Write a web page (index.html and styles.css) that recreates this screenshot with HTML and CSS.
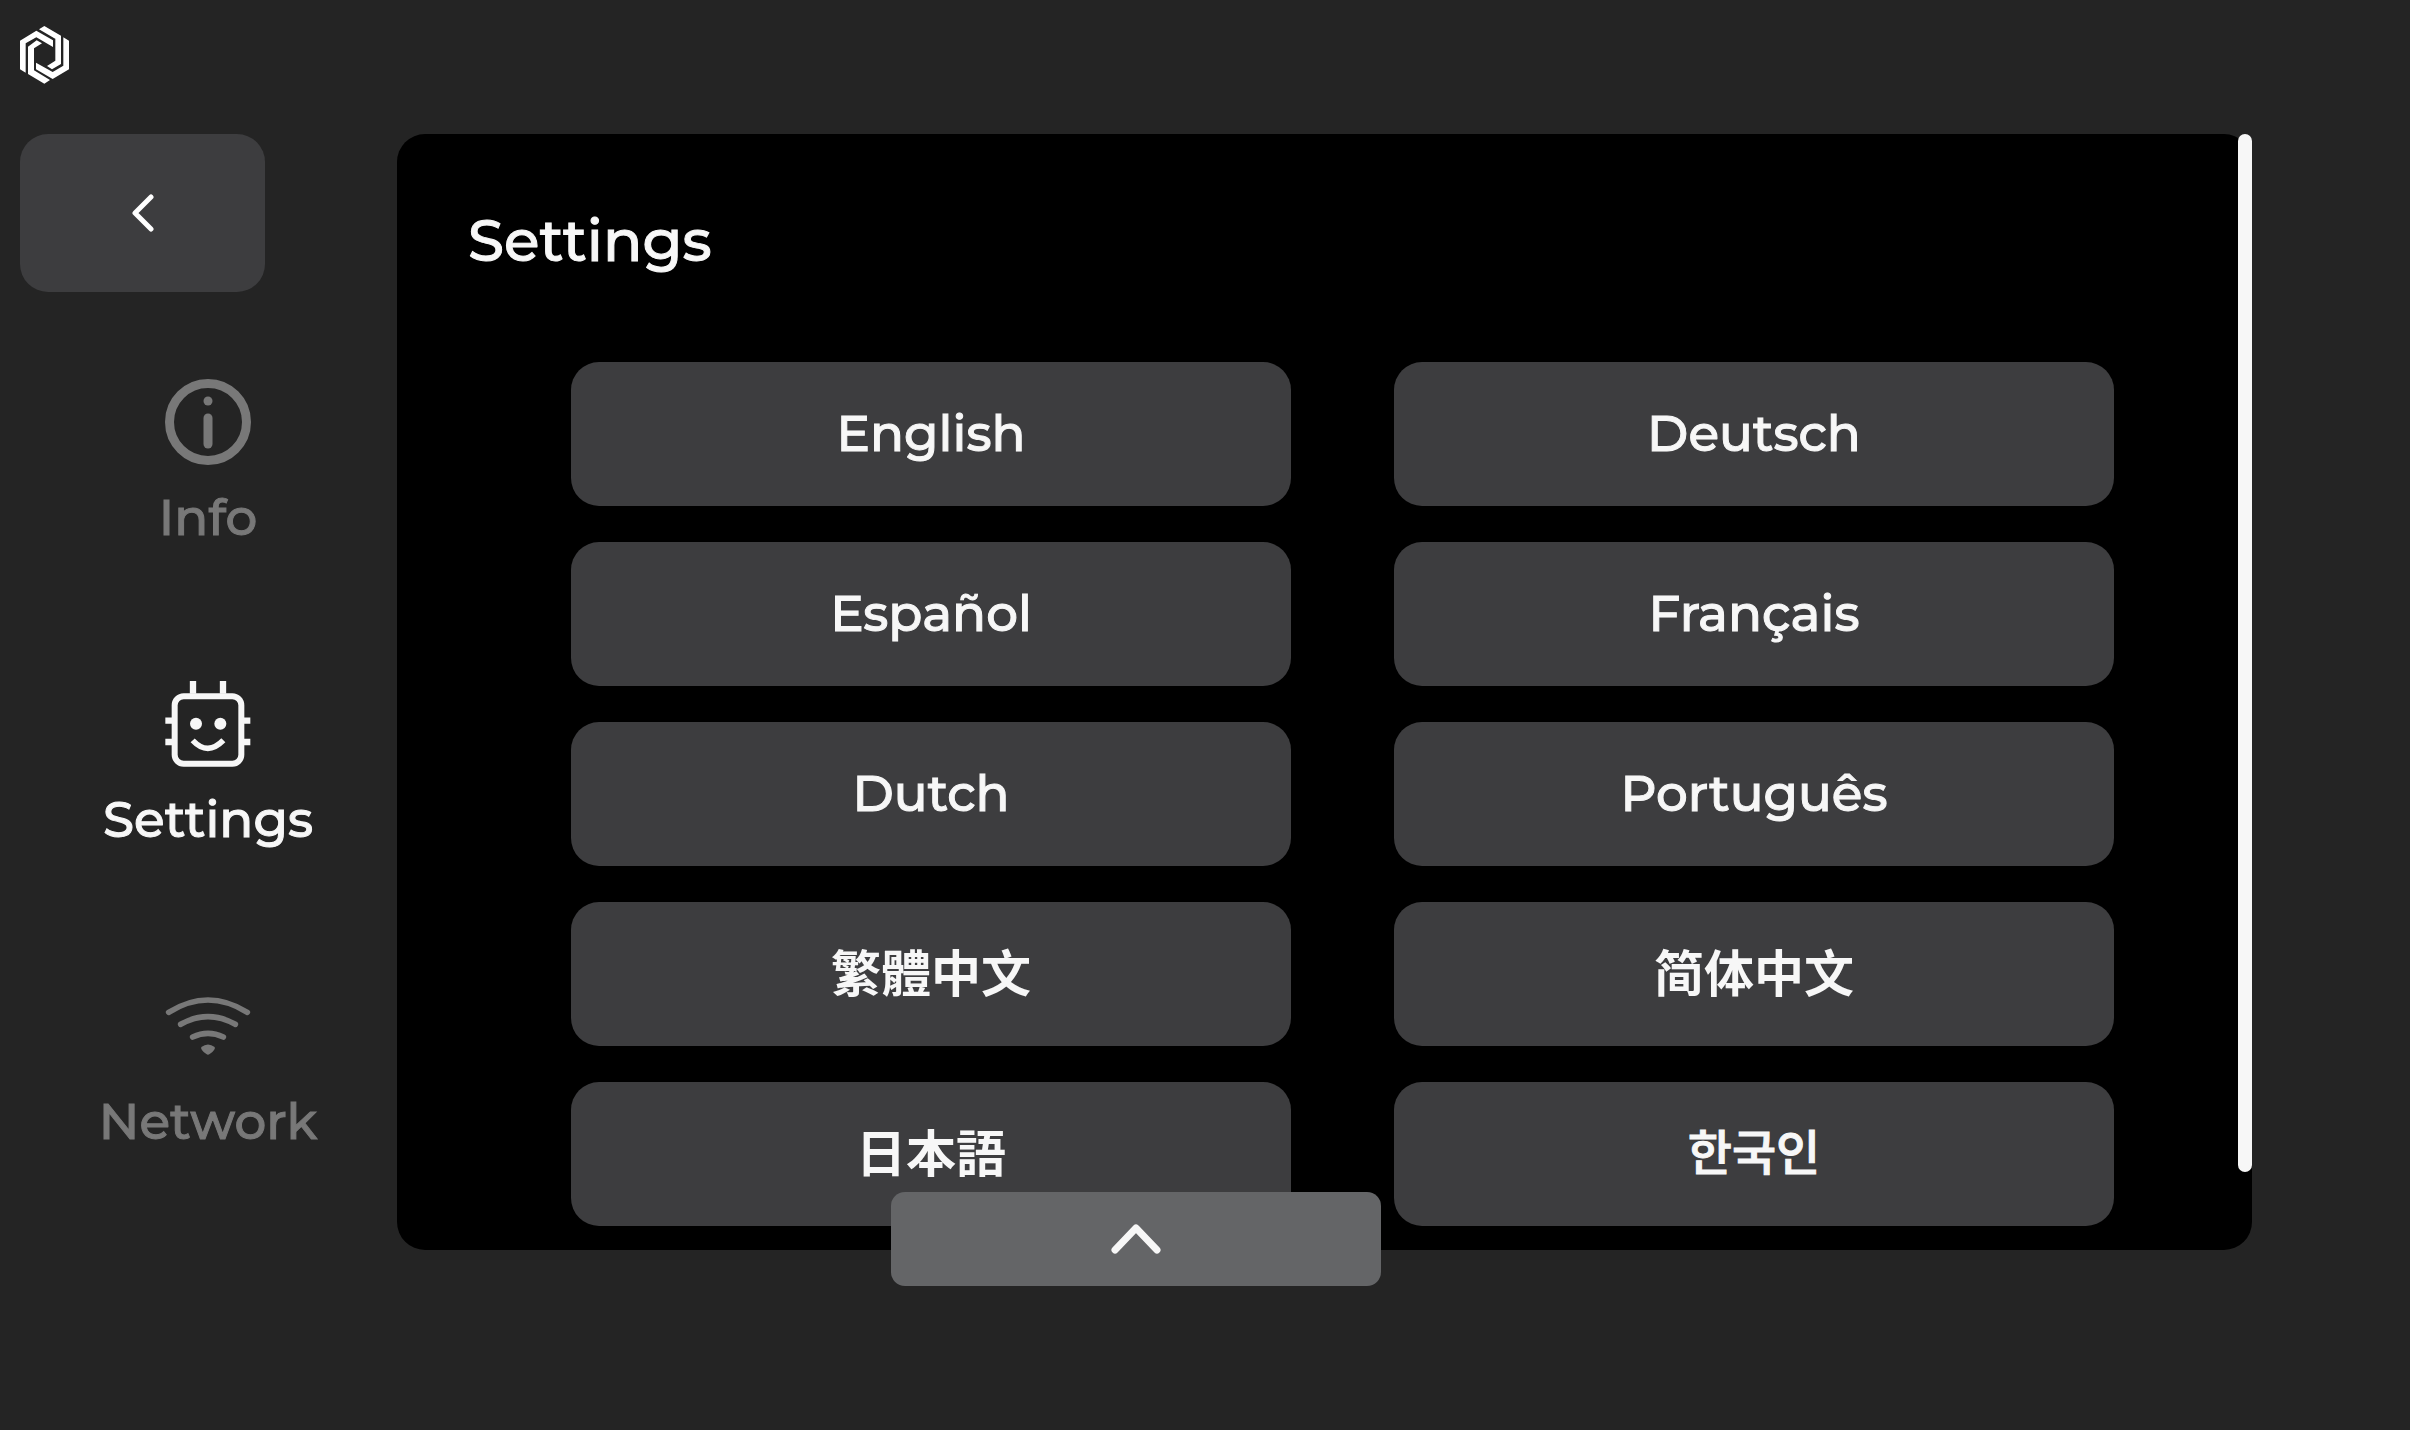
FILE: index.html
```html
<!DOCTYPE html>
<html lang="en">
<head>
  <meta charset="utf-8">
  <meta name="viewport" content="width=device-width, initial-scale=1">
  <title>Settings</title>
  <link rel="stylesheet" href="styles.css">
</head>
<body>
  <header class="topbar">
    <svg class="logo" viewBox="60 78 147 174" role="img" aria-label="Home">
      <path d="M117 88 133 78 183 107V192L156 208 141 198 166 182V116L163 115Z"/>
      <path d="M60 122 109 92 159 121V141L109 112 77 130V218L60 208Z"/>
      <path d="M84 140 110 121 126 130 102 145V211L150 240 133 251 84 222Z"/>
      <path d="M190 112 207 122V208L158 237 108 208V188L158 216 190 197Z"/>
    </svg>
  </header>

  <div class="layout">
    <aside class="sidebar">
      <button class="back" type="button" aria-label="Back">
        <svg class="back-icon" viewBox="0 0 22 38"><path d="M19 3 3 19 19 35"/></svg>
      </button>
      <nav class="nav">
        <a class="nav-item" href="#info">
          <svg class="nav-icon" viewBox="0 0 86 86">
            <circle class="line" cx="43" cy="43" r="38.5" stroke-width="9"/>
            <circle class="solid" cx="43" cy="22" r="4.5"/>
            <path class="line round" d="M43 39V65" stroke-width="9"/>
          </svg>
          <span>Info</span>
        </a>
        <a class="nav-item active" href="#settings" aria-current="page">
          <svg class="nav-icon" viewBox="254 63 258 258">
            <rect class="line" x="283" y="109" width="200" height="202" rx="27" stroke-width="18"/>
            <path class="line" d="M338 63V101M428 63V101M255 182H275M255 246H275M491 182H510M491 246H510" stroke-width="19"/>
            <circle class="solid" cx="347" cy="191" r="18"/>
            <circle class="solid" cx="420" cy="191" r="18"/>
            <path class="line" d="M337 241Q382 289 429 241" stroke-width="17"/>
          </svg>
          <span>Settings</span>
        </a>
        <a class="nav-item" href="#network">
          <svg class="nav-icon" viewBox="255 42 258 258">
            <path class="line round" d="M266 130Q384 56 502 130M302 166Q384 120 466 166M338 204Q384 182 430 204" stroke-width="17"/>
            <path class="solid" d="M364 234Q384 219 404 234Q408 242 389 255Q384 259 379 255Q360 242 364 234Z"/>
          </svg>
          <span>Network</span>
        </a>
      </nav>
    </aside>

    <main class="panel">
      <h1 class="title">Settings</h1>
      <div class="languages">
        <button class="language" type="button" lang="en">English</button>
        <button class="language" type="button" lang="de">Deutsch</button>
        <button class="language" type="button" lang="es">Español</button>
        <button class="language" type="button" lang="fr">Français</button>
        <button class="language" type="button" lang="nl">Dutch</button>
        <button class="language" type="button" lang="pt">Português</button>
        <button class="language cjk" type="button" lang="zh-Hant">繁體中文</button>
        <button class="language cjk" type="button" lang="zh-Hans">简体中文</button>
        <button class="language cjk" type="button" lang="ja">日本語</button>
        <button class="language cjk" type="button" lang="ko">한국인</button>
      </div>
      <div class="scroll-thumb"></div>
    </main>

    <button class="drawer" type="button" aria-label="Open drawer">
      <svg class="drawer-icon" viewBox="0 0 50 30"><path d="M4 26 25 4 46 26"/></svg>
    </button>
  </div>
</body>
</html>
```
FILE: styles.css
```css
* {
  box-sizing: border-box;
}

body {
  min-height: 100vh;
  margin: 0;
  background: #242424;
  color: #f7f7f7;
  font-family: "Montserrat Medium", Montserrat, Inter, "Noto Sans CJK SC", sans-serif;
  font-size: 50px;
  font-weight: 500;
  line-height: 60px;
  -webkit-text-stroke: 1px currentColor;
}

svg {
  display: block;
}

button {
  margin: 0;
  padding: 0;
  border: 0;
  color: inherit;
  font: inherit;
  cursor: pointer;
}

.topbar {
  padding: 26px 20px 50px;
}

.logo {
  width: 49px;
  height: 58px;
  fill: #fff;
}

.layout {
  position: relative;
  display: flex;
  margin: 0 158px 0 20px;
}

.sidebar {
  flex: none;
  width: 377px;
}

.back {
  display: flex;
  align-items: center;
  justify-content: center;
  width: 245px;
  height: 158px;
  border-radius: 28px;
  background: #3d3d3f;
}

.back-icon {
  width: 22px;
  height: 38px;
  fill: none;
  stroke: #fff;
  stroke-width: 5;
  stroke-linecap: round;
  stroke-linejoin: round;
}

.nav {
  display: flex;
  flex-direction: column;
  gap: 133px;
  width: 376px;
  padding-top: 87px;
}

.nav-item {
  display: flex;
  flex-direction: column;
  align-items: center;
  gap: 23px;
  color: #787878;
  text-decoration: none;
}

.nav-item.active {
  color: #f7f7f7;
}

.nav-icon {
  width: 86px;
  height: 86px;
}

.line {
  fill: none;
  stroke: currentColor;
}

.round {
  stroke-linecap: round;
}

.solid {
  fill: currentColor;
}

.panel {
  position: relative;
  flex: 1;
  padding: 71px 138px 24px 174px;
  border-radius: 28px;
  background: #000;
}

.title {
  margin: 0 0 85px -103px;
  font-size: 58px;
  font-weight: 500;
  line-height: 72px;
}

.languages {
  display: grid;
  grid-template-columns: 1fr 1fr;
  gap: 36px 103px;
}

.language {
  height: 144px;
  border-radius: 28px;
  background: #3d3d3f;
}

.cjk {
  padding-bottom: 8px;
  font-weight: 700;
  -webkit-text-stroke: 0;
}

.language:lang(zh-Hant) {
  font-family: "Noto Sans CJK TC", sans-serif;
}

.language:lang(zh-Hans) {
  font-family: "Noto Sans CJK SC", sans-serif;
}

.language:lang(ja) {
  font-family: "Noto Sans CJK JP", sans-serif;
}

.language:lang(ko) {
  padding-bottom: 10px;
  font-family: "Noto Sans CJK KR", sans-serif;
  font-size: 48px;
  font-weight: 500;
  -webkit-text-stroke: 1px currentColor;
}

.scroll-thumb {
  position: absolute;
  top: 0;
  right: 0;
  width: 14px;
  height: 93%;
  border-radius: 7px;
  background: #f7f7f7;
}

.drawer {
  position: absolute;
  bottom: -36px;
  left: 50%;
  display: flex;
  align-items: center;
  justify-content: center;
  width: 490px;
  height: 94px;
  border-radius: 14px;
  background: #646567;
  transform: translateX(-50%);
}

.drawer-icon {
  width: 50px;
  height: 30px;
  fill: none;
  stroke: #f7f7f7;
  stroke-width: 7;
  stroke-linecap: round;
  stroke-linejoin: round;
}
```
